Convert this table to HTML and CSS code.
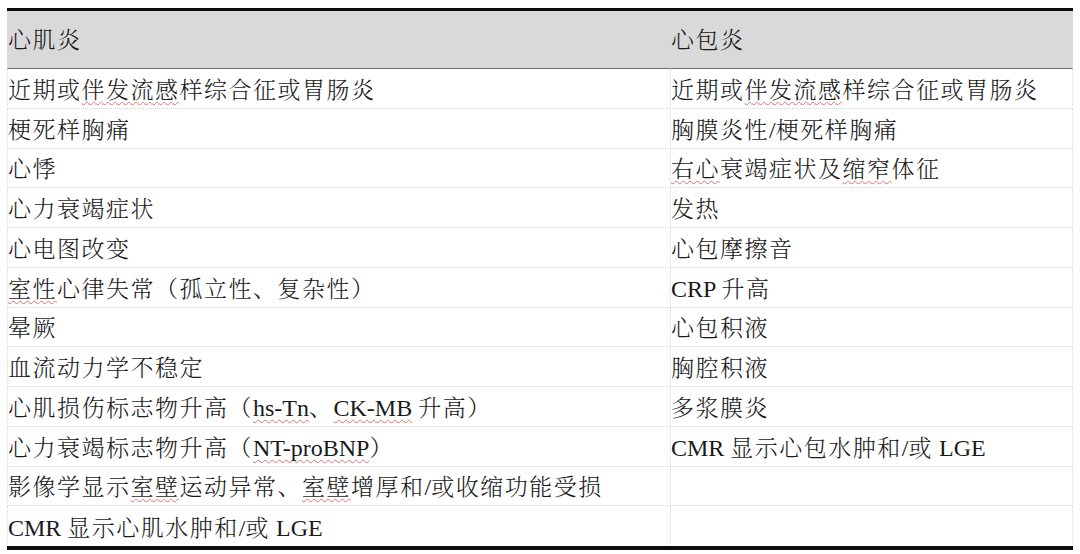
FILE: index.html
```html
<!DOCTYPE html>
<html lang="zh-CN">
<head>
<meta charset="utf-8">
<title>心肌炎与心包炎</title>
<link rel="stylesheet" href="styles.css">
</head>
<body>
<div class="tbl">
  <div class="cell head c1"><span class="txt">心肌炎</span></div>
  <div class="cell head c2"><span class="txt">心包炎</span></div>

  <div class="cell c1"><span class="txt">近期或<span class="sp">伴发流感</span>样综合征或胃肠炎</span></div>
  <div class="cell c2"><span class="txt">近期或<span class="sp">伴发流感</span>样综合征或胃肠炎</span></div>

  <div class="cell c1"><span class="txt">梗死样胸痛</span></div>
  <div class="cell c2"><span class="txt">胸膜炎性<span class="lat">/</span>梗死样胸痛</span></div>

  <div class="cell c1"><span class="txt">心悸</span></div>
  <div class="cell c2"><span class="txt"><span class="sp">右心</span>衰竭症状及<span class="sp">缩窄</span>体征</span></div>

  <div class="cell c1"><span class="txt">心力衰竭症状</span></div>
  <div class="cell c2"><span class="txt">发热</span></div>

  <div class="cell c1"><span class="txt">心电图改变</span></div>
  <div class="cell c2"><span class="txt">心包摩擦音</span></div>

  <div class="cell c1"><span class="txt"><span class="sp">室性</span>心律失常（孤立性、复杂性）</span></div>
  <div class="cell c2"><span class="txt"><span class="lat">CRP </span>升高</span></div>

  <div class="cell c1"><span class="txt">晕厥</span></div>
  <div class="cell c2"><span class="txt">心包积液</span></div>

  <div class="cell c1"><span class="txt">血流动力学不稳定</span></div>
  <div class="cell c2"><span class="txt">胸腔积液</span></div>

  <div class="cell c1"><span class="txt">心肌损伤标志物升高（<span class="lat sp">hs-Tn</span>、<span class="lat sp">CK-MB</span><span class="lat"> </span>升高）</span></div>
  <div class="cell c2"><span class="txt">多浆膜炎</span></div>

  <div class="cell c1"><span class="txt">心力衰竭标志物升高（<span class="lat sp">NT-proBNP</span>）</span></div>
  <div class="cell c2"><span class="txt"><span class="lat">CMR </span>显示心包水肿和<span class="lat">/</span>或<span class="lat"> LGE</span></span></div>

  <div class="cell c1"><span class="txt">影像学显示<span class="sp">室壁</span>运动异常、<span class="sp">室壁</span>增厚和<span class="lat">/</span>或收缩功能受损</span></div>
  <div class="cell c2"></div>

  <div class="cell c1 last"><span class="txt"><span class="lat">CMR </span>显示心肌水肿和<span class="lat">/</span>或<span class="lat"> LGE</span></span></div>
  <div class="cell c2 last"></div>
</div>
</body>
</html>
```

FILE: styles.css
```css
html, body {
  margin: 0;
  padding: 0;
  background: #ffffff;
}

body {
  padding: 8px 7px 0;
  font-family: "Liberation Serif", "Noto Serif CJK SC", "Noto Sans CJK SC", serif;
  color: #1a1a1a;
}

.tbl {
  width: 1066px;
  display: grid;
  grid-template-columns: 663px 403px;
  grid-template-rows: 58px repeat(12, 39.75px);
  border-top: 3px solid #0d0d0d;
  border-bottom: 4px solid #0d0d0d;
}

.cell {
  box-sizing: border-box;
  display: flex;
  align-items: center;
  padding-left: 0;
  font-size: 23px;
  font-weight: 300;
  letter-spacing: 1.5px;
  white-space: pre;
  border-bottom: 1px dotted #d4d4d4;
  border-left: 1px dotted #dadada;
}

.c2 {
  border-right: 1px dotted #dadada;
}

.head {
  background: #d9d9d9;
  border-bottom: 1px solid #6e6e6e;
  padding-bottom: 2px;
}

.last {
  border-bottom: none;
}

.lat {
  letter-spacing: 0;
  font-weight: 400;
  font-size: 24px;
}

.sp {
  text-decoration: underline wavy #e07070;
  text-decoration-thickness: 1px;
  text-underline-offset: 3px;
  text-decoration-skip-ink: none;
}
```
